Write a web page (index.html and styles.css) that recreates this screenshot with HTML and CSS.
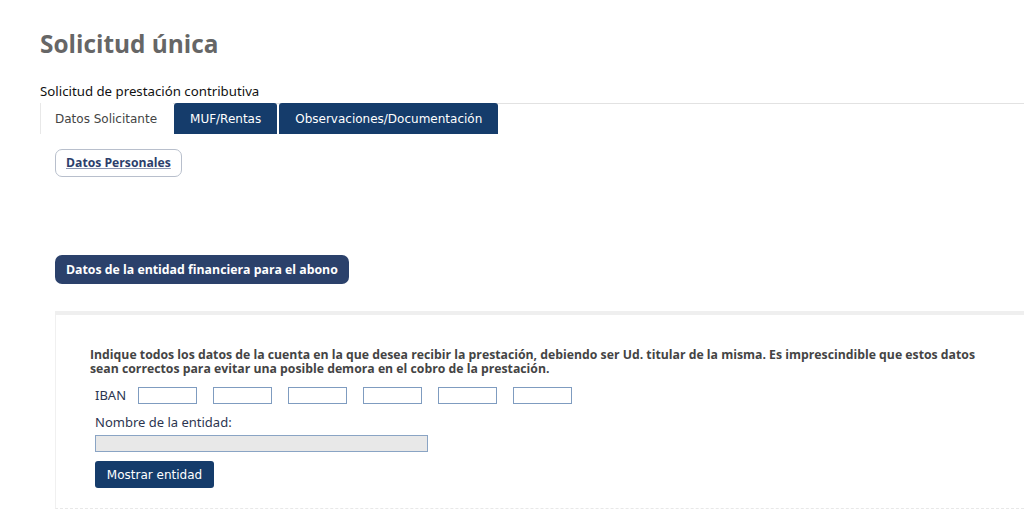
FILE: index.html
```html
<!DOCTYPE html>
<html lang="es">
<head>
<meta charset="utf-8">
<title>Solicitud única</title>
<link rel="stylesheet" href="styles.css">
</head>
<body>
<div class="page">
  <h1 class="title">Solicitud única</h1>
  <div class="subtitle">Solicitud de prestación contributiva</div>
  <div class="tabs">
    <div class="tab tab-active">Datos Solicitante</div>
    <div class="tab">MUF/Rentas</div>
    <div class="tab">Observaciones/Documentación</div>
  </div>
  <div class="content">
    <div class="pill-row"><a class="pill" href="#">Datos Personales</a></div>
    <div class="section-head">Datos de la entidad financiera para el abono</div>
    <div class="panel">
      <p class="note">Indique todos los datos de la cuenta en la que desea recibir la prestación, debiendo ser Ud. titular de la misma. Es imprescindible que estos datos sean correctos para evitar una posible demora en el cobro de la prestación.</p>
      <div class="iban-row">
        <span class="label">IBAN</span>
        <input class="iban" type="text">
        <input class="iban" type="text">
        <input class="iban" type="text">
        <input class="iban" type="text">
        <input class="iban" type="text">
        <input class="iban" type="text">
      </div>
      <div class="label label-block">Nombre de la entidad:</div>
      <input class="entity" type="text" disabled>
      <div><button class="btn" type="button">Mostrar entidad</button></div>
    </div>
  </div>
</div>
</body>
</html>
```
FILE: styles.css
```css
html, body {
  margin: 0;
  padding: 0;
  background: #fff;
}
.page {
  padding-left: 40px;
  font-family: "Open Sans", sans-serif;
}
.title {
  margin: 0;
  padding-top: 26px;
  font-size: 24.4px;
  line-height: 36px;
  font-weight: 700;
  color: #666;
}
.subtitle {
  margin-top: 21px;
  font-family: "Noto Sans", sans-serif;
  font-size: 13.25px;
  line-height: 16px;
  color: #111;
  height: 20px;
}
.tabs {
  display: flex;
  border-top: 1px solid #e2e2e2;
  height: 30px;
}
.tab {
  font-family: "DejaVu Sans", Verdana, sans-serif;
  font-size: 12px;
  color: #fff;
  background: #153c6b;
  border-radius: 3px 3px 0 0;
  padding: 0 16px;
  display: flex;
  align-items: center;
  margin-right: 2px;
  margin-top: -1px;
}
.tab-active {
  background: #fff;
  color: #444;
  border-left: 1px solid #e8e8e8;
  border-radius: 0;
  padding: 0 16px 0 14px;
  margin-right: 1px;
}
.content {
  padding-left: 15px;
}
.pill-row {
  padding-top: 15px;
}
.pill {
  display: inline-block;
  border: 1px solid #b8bfcc;
  border-radius: 7px;
  padding: 0 10px;
  height: 26px;
  line-height: 25px;
  font-size: 12.2px;
  font-weight: 700;
  color: #2c3e6b;
  text-decoration: underline;
  text-decoration-color: #8a94b0;
}
.section-head {
  margin-top: 78px;
  display: inline-block;
  background: #2b416b;
  color: #fff;
  border-radius: 7px;
  font-size: 12.3px;
  font-weight: 700;
  height: 29px;
  line-height: 29px;
  padding: 0 11px;
}
.panel {
  margin-top: 27px;
  border-top: 4px solid #efefef;
  border-left: 1px solid #f0f0f0;
  border-bottom: 1px dashed #e8e8e8;
  padding: 33px 0 17px 34px;
  height: 143px;
}
.note {
  margin: 0;
  font-size: 12.26px;
  line-height: 14px;
  font-weight: 700;
  color: #444;
  max-width: 900px;
}
.iban-row {
  display: flex;
  align-items: center;
  gap: 16px;
  margin-top: 10px;
  padding-left: 5px;
}
.label {
  font-family: "Noto Sans", sans-serif;
  font-size: 13px;
  color: #2c3550;
}
.iban-row .label {
  margin-right: -4px;
}
.iban {
  width: 59px;
  height: 17px;
  box-sizing: border-box;
  border: 1px solid #7f9cc0;
  margin: 0;
  padding: 0;
  background: #fff;
}
.label-block {
  margin-top: 10px;
  padding-left: 5px;
  line-height: 17px;
}
.entity {
  display: block;
  margin: 4px 0 0 5px;
  width: 333px;
  height: 17px;
  box-sizing: border-box;
  border: 1px solid #8aa4c4;
  background: #e8e8e8;
  padding: 0;
}
.btn {
  margin: 9px 0 0 5px;
  height: 27px;
  width: 119px;
  border: none;
  border-radius: 3px;
  background: #153c6b;
  color: #fff;
  font-family: "DejaVu Sans", Verdana, sans-serif;
  font-size: 12px;
  padding: 0;
}
```
